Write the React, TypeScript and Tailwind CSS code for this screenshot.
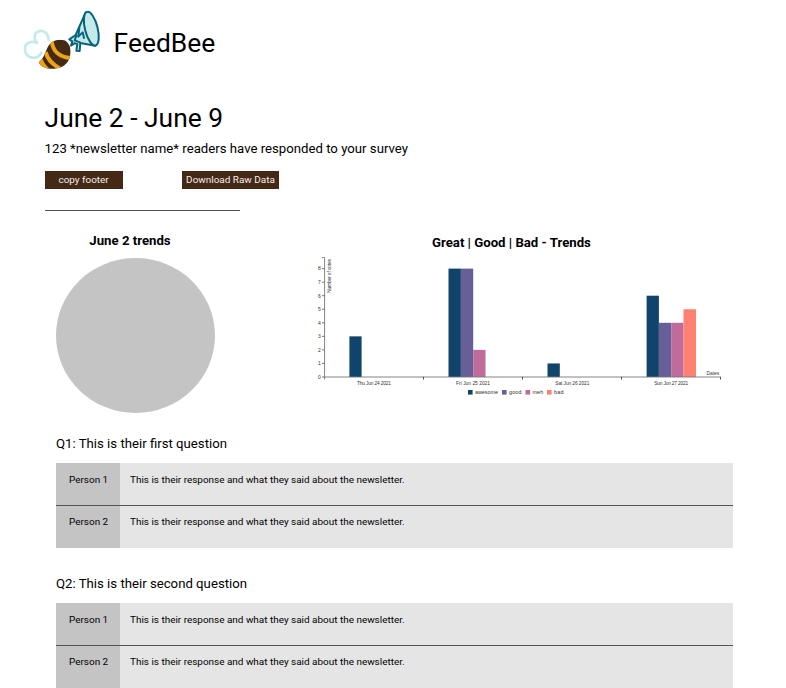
import React from "react";

const ticks = [0, 1, 2, 3, 4, 5, 6, 7, 8];

const bars = [
  { x: 349.4, w: 12.2, v: 3, fill: "#10446a" },
  { x: 448.5, w: 12.4, v: 8, fill: "#10446a" },
  { x: 460.9, w: 12.3, v: 8, fill: "#665f98" },
  { x: 473.2, w: 12.3, v: 2, fill: "#bf6b9b" },
  { x: 547.5, w: 12.3, v: 1, fill: "#10446a" },
  { x: 646.6, w: 12.3, v: 6, fill: "#10446a" },
  { x: 658.9, w: 12.3, v: 4, fill: "#665f98" },
  { x: 671.2, w: 12.3, v: 4, fill: "#bf6b9b" },
  { x: 683.5, w: 12.5, v: 5, fill: "#ff8271" },
];

const dates = [
  { x: 374, label: "Thu Jun 24 2021" },
  { x: 473, label: "Fri Jun 25 2021" },
  { x: 572.3, label: "Sat Jun 26 2021" },
  { x: 671.2, label: "Sun Jun 27 2021" },
];

const legend = [
  { x: 468, w: 23, label: "awesome", fill: "#10446a" },
  { x: 502, w: 12.5, label: "good", fill: "#665f98" },
  { x: 525.5, w: 10.7, label: "meh", fill: "#bf6b9b" },
  { x: 547, w: 9.5, label: "bad", fill: "#ff8271" },
];

const STEP = 13.55;
const BASE = 377;

function Logo() {
  return (
    <svg className="h-[70px] w-[95px] shrink-0" viewBox="0 0 285 210" fill="none">
      <path
        d="M101 104 C99 83 84 73 68 80 C56 86 56 103 66 114 C51 106 33 112 30 127 C28 143 37 157 52 158 C65 160 74 153 79 143"
        stroke="#c5eaea" strokeWidth="8" strokeLinecap="round" strokeLinejoin="round"
      />
      <clipPath id="bee-body">
        <path d="M71 171 C86 163 90 143 98 127 C108 106 130 101 148 106 C163 113 169 131 166 149 C163 171 148 186 126 190 C106 194 80 191 71 171 Z" />
      </clipPath>
      <g clipPath="url(#bee-body)">
        <rect x="65" y="95" width="110" height="105" fill="#442a16" />
        <path d="M110 108 C113 138 133 157 168 159" stroke="#eca413" strokeWidth="12" />
        <path d="M92 141 C97 163 111 178 137 192" stroke="#eca413" strokeWidth="12" />
        <path d="M66 162 L84 163 C86 174 94 182 108 195 L64 195 Z" fill="#eca413" />
      </g>
      <g stroke="#07647c" strokeWidth="6" strokeLinejoin="round" strokeLinecap="round" fill="#c5eaea">
        <path d="M212 22 L182 90 L163 103 L172 109 L168 122 L178 115 L187 117 L184 137 L194 138 L196 114 L241 122 Z" />
        <ellipse cx="229" cy="71" rx="19" ry="52" transform="rotate(-14 229 71)" />
        <path d="M193 68 L190 95 L203 82 L207 99 M184 92 L179 106 L195 112" fill="none" />
      </g>
    </svg>
  );
}

function Chart() {
  return (
    <svg className="block h-[150px] w-[430px]" viewBox="310 250 430 150" fontFamily="'Liberation Sans', Arial, sans-serif" fill="#333">
      {bars.map((b) => (
        <rect key={b.x} x={b.x} y={BASE - b.v * STEP} width={b.w} height={b.v * STEP} fill={b.fill} />
      ))}
      <path d="M322 257.5 H324.6 V379.5" stroke="#777" strokeWidth="0.9" fill="none" />
      <path d="M324 377 H720.5" stroke="#777" strokeWidth="0.9" />
      {[423.5, 522.5, 621.5, 720.5].map((x) => (
        <path key={x} d={`M${x} 376.8 V379.6`} stroke="#555" strokeWidth="1" />
      ))}
      {ticks.map((t) => (
        <g key={t}>
          <path d={`M322 ${BASE - t * STEP} H324.6`} stroke="#666" strokeWidth="0.9" />
          <text x="320.8" y={BASE - t * STEP + 1.8} fontSize="5" textAnchor="end">{t}</text>
        </g>
      ))}
      <text transform="translate(330.6 293) rotate(-90)" fontSize="5" textLength="34">Number of votes</text>
      {dates.map((d) => (
        <text key={d.label} x={d.x} y="384.6" fontSize="4.8" textAnchor="middle" textLength="34">{d.label}</text>
      ))}
      <text x="706.5" y="375" fontSize="4.9">Dates</text>
      {legend.map((l) => (
        <g key={l.label}>
          <rect x={l.x} y="390" width="4.6" height="4.6" fill={l.fill} />
          <text x={l.x + 7} y="394.3" fontSize="5.4" textLength={l.w}>{l.label}</text>
        </g>
      ))}
    </svg>
  );
}

function Row({ name }: { name: string }) {
  return (
    <div className="flex h-[42px] text-[9.95px] leading-[34px] last:h-[43px]">
      <div className="w-16 shrink-0 bg-[#c4c4c4] pl-[13px]">{name}</div>
      <div className="grow bg-[#e5e5e5] pl-[10px]">
        This is their response and what they said about the newsletter.
      </div>
    </div>
  );
}

function Question({ title }: { title: string }) {
  return (
    <section className="h-[140px]">
      <h2 className="h-[29px] text-[13.2px] leading-5">{title}</h2>
      <div className="flex w-[677px] flex-col">
        <Row name="Person 1" />
        <div className="z-10 -mb-px h-px bg-[#555]" />
        <Row name="Person 2" />
      </div>
    </section>
  );
}

export default function App() {
  return (
    <main className="h-[688px] w-[786px] overflow-hidden bg-white pt-[5px] font-['Roboto',sans-serif] text-black">
      <header className="flex h-[93px] pl-[15px]">
        <Logo />
        <span className="pl-[3.6px] pt-[18px] text-[26.4px] leading-10">FeedBee</span>
      </header>
      <div className="h-[113px] pl-[44.6px]">
        <h1 className="text-[26.4px] leading-10">June 2 - June 9</h1>
        <p className="pt-px text-[13.2px] leading-5">123 *newsletter name* readers have responded to your survey</p>
        <div className="flex gap-[59.4px] pt-3 text-[9.95px] text-[#f5efe8]">
          <button className="h-[18px] w-[78px] bg-[#442a16] leading-[18px]">copy footer</button>
          <button className="h-[18px] w-[97px] whitespace-nowrap bg-[#442a16] leading-[18px]">Download Raw Data</button>
        </div>
        <div className="mt-[21px] h-px w-[195px] bg-[#555]" />
      </div>
      <div className="flex h-[223px] pl-14 pt-5">
        <section className="w-[254px]">
          <h2 className="w-[148px] text-center text-[13.2px] font-bold leading-5">June 2 trends</h2>
          <div className="-ml-[0.3px] mt-[7px] h-[155px] w-[159px] rounded-[50%] bg-[#c4c4c4]" />
        </section>
        <section>
          <h2 className="h-[19px] pl-[122px] pt-[2px] text-[13.2px] font-bold leading-5">Great | Good | Bad - Trends</h2>
          <Chart />
        </section>
      </div>
      <div className="pl-14">
        <Question title="Q1: This is their first question" />
        <Question title="Q2: This is their second question" />
      </div>
    </main>
  );
}
